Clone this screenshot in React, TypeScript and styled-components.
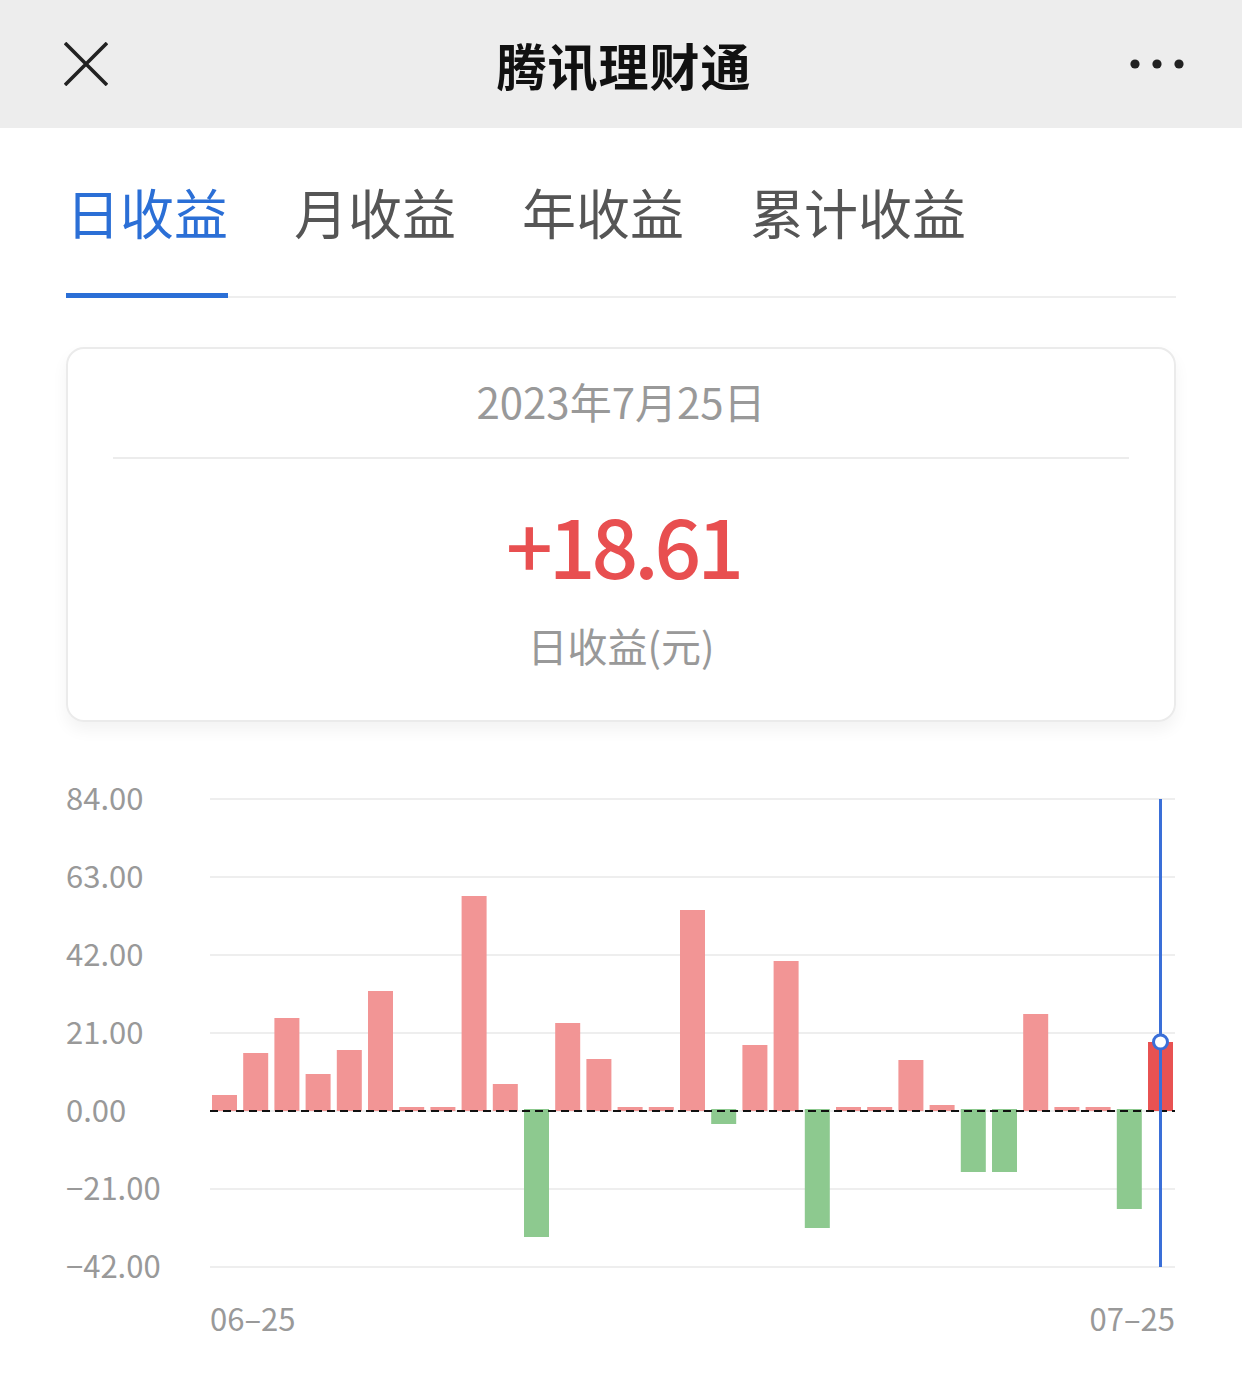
import React from "react";
import styled, { createGlobalStyle } from "styled-components";

const GlobalStyle = createGlobalStyle`
  html, body { margin: 0; padding: 0; background: #ffffff; }
  body {
    font-family: "Noto Sans CJK SC", "Noto Sans", sans-serif;
    -webkit-font-smoothing: antialiased;
  }
  * { box-sizing: border-box; }
`;

const Page = styled.div`
  width: 1242px;
  min-height: 1377px;
  background: #ffffff;
`;

const NavBar = styled.header`
  height: 128px;
  background: #ededed;
  display: grid;
  grid-template-columns: 1fr auto 1fr;
  align-items: center;
  padding: 0 58px 0 64px;
`;

const NavTitle = styled.h1`
  margin: 0;
  font-size: 50px;
  font-weight: 700;
  color: #111111;
  letter-spacing: 1px;
  line-height: 1;
`;

const NavLeft = styled.div`
  display: flex;
  align-items: center;
`;

const NavRight = styled.div`
  display: flex;
  justify-content: flex-end;
  align-items: center;
`;

const Content = styled.main`
  padding: 0 66px;
`;

const TabBar = styled.nav`
  display: flex;
  gap: 66px;
  padding-top: 57px;
  border-bottom: 2px solid #eeeeee;
`;

const Tab = styled.div<{ $active?: boolean }>`
  font-size: 54px;
  line-height: 54px;
  padding-bottom: 54px;
  margin-bottom: -2px;
  color: ${(p) => (p.$active ? "#2b6fd6" : "#555555")};
  border-bottom: 5px solid ${(p) => (p.$active ? "#2b6fd6" : "transparent")};
  white-space: nowrap;
`;

const Card = styled.section`
  margin-top: 49px;
  border: 2px solid #ebebeb;
  border-radius: 18px;
  box-shadow: 0 8px 16px rgba(0, 0, 0, 0.05);
  padding: 27px 0 50px;
  display: flex;
  flex-direction: column;
  align-items: stretch;
  text-align: center;
`;

const DateText = styled.div`
  font-size: 42px;
  line-height: 50px;
  color: #999999;
  padding-bottom: 31px;
`;

const Divider = styled.div`
  height: 2px;
  background: #ececec;
  margin: 0 45px;
`;

const Amount = styled.div`
  margin-top: 43px;
  font-size: 82px;
  line-height: 84px;
  font-weight: 500;
  color: #e84f50;
  letter-spacing: -4px;
  text-indent: 4px;
`;

const AmountLabel = styled.div`
  margin-top: 34px;
  font-size: 40px;
  line-height: 50px;
  color: #999999;
`;

const Chart = styled.section`
  margin-top: 55px;
  display: grid;
  grid-template-columns: 144px 965px;
  grid-template-rows: auto auto;
`;

const YAxis = styled.div`
  display: flex;
  flex-direction: column;
  justify-content: space-between;
  height: 508px;
`;

const AxisLabel = styled.span`
  font-size: 31px;
  line-height: 40px;
  color: #999999;
  white-space: nowrap;
`;

const PlotWrap = styled.div`
  padding-top: 22px;
`;

const Plot = styled.svg`
  display: block;
  overflow: visible;
`;

const XAxis = styled.div`
  grid-column: 2;
  margin-top: 13px;
  display: flex;
  justify-content: space-between;
`;

const yLabels = ["84.00", "63.00", "42.00", "21.00", "0.00", "\u221221.00", "\u221242.00"];

// bar heights in px (positive up, negative down); scale 78px per 21
const bars = [
  16, 58, 93, 37, 61, 120, 4, 4, 215, 27, -126, 88, 52, 4, 4, 201, -13, 66, 150, -117,
  4, 4, 51, 6, -61, -61, 97, 4, 4, -98, 69,
];

const PLOT_W = 965;
const PLOT_H = 468;
const ZERO = 312;
const PITCH = 31.2;
const BAR_W = 25;

function CloseIcon() {
  return (
    <svg width="44" height="44" viewBox="0 0 44 44">
      <path d="M1 1 L43 43 M43 1 L1 43" stroke="#222" strokeWidth="3.6" strokeLinecap="butt" />
    </svg>
  );
}

function MoreIcon() {
  return (
    <svg width="54" height="12" viewBox="0 0 54 12">
      <circle cx="5" cy="6" r="4.6" fill="#222" />
      <circle cx="27" cy="6" r="4.6" fill="#222" />
      <circle cx="49" cy="6" r="4.6" fill="#222" />
    </svg>
  );
}

function BarChart() {
  const last = bars.length - 1;
  const selX = 2 + last * PITCH + BAR_W / 2;
  return (
    <Plot width={PLOT_W} height={PLOT_H} viewBox={`0 0 ${PLOT_W} ${PLOT_H}`}>
      {[0, 1, 2, 3, 4, 5, 6].map((i) => (
        <line key={i} x1={0} x2={PLOT_W} y1={i * 78} y2={i * 78} stroke="#e9e9e9" strokeWidth={1.6} />
      ))}
      {bars.map((h, i) => {
        const x = 2 + i * PITCH;
        const selected = i === last;
        if (h >= 0) {
          return (
            <rect
              key={i}
              x={x}
              y={ZERO - h}
              width={BAR_W}
              height={h}
              fill={selected ? "#e85252" : "#f29595"}
            />
          );
        }
        return <rect key={i} x={x} y={ZERO - 2} width={BAR_W} height={-h + 2} fill="#8dc98f" />;
      })}
      <line x1={0} x2={PLOT_W} y1={ZERO} y2={ZERO} stroke="#111" strokeWidth={2} strokeDasharray="8 5" />
      <line x1={selX} x2={selX} y1={0} y2={PLOT_H} stroke="#3a6fd8" strokeWidth={3} />
      <circle cx={selX} cy={ZERO - bars[last]} r={7} fill="#ffffff" stroke="#3a6fd8" strokeWidth={3} />
    </Plot>
  );
}

export default function App() {
  return (
    <Page>
      <GlobalStyle />
      <NavBar>
        <NavLeft>
          <CloseIcon />
        </NavLeft>
        <NavTitle>腾讯理财通</NavTitle>
        <NavRight>
          <MoreIcon />
        </NavRight>
      </NavBar>
      <Content>
        <TabBar>
          <Tab $active>日收益</Tab>
          <Tab>月收益</Tab>
          <Tab>年收益</Tab>
          <Tab>累计收益</Tab>
        </TabBar>
        <Card>
          <DateText>2023年7月25日</DateText>
          <Divider />
          <Amount>+18.61</Amount>
          <AmountLabel>日收益(元)</AmountLabel>
        </Card>
        <Chart>
          <YAxis>
            {yLabels.map((l) => (
              <AxisLabel key={l}>{l}</AxisLabel>
            ))}
          </YAxis>
          <PlotWrap>
            <BarChart />
          </PlotWrap>
          <XAxis>
            <AxisLabel>06–25</AxisLabel>
            <AxisLabel>07–25</AxisLabel>
          </XAxis>
        </Chart>
      </Content>
    </Page>
  );
}
